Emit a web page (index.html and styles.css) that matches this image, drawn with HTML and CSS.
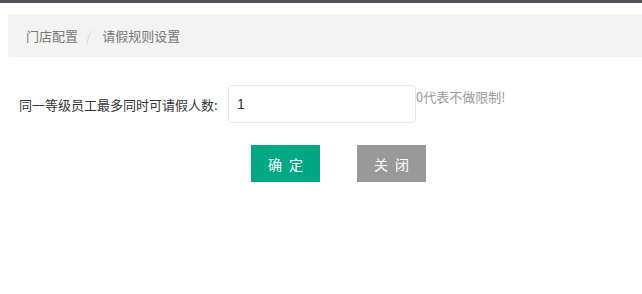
FILE: index.html
```html
<!DOCTYPE html>
<html lang="zh-CN">
<head>
<meta charset="utf-8">
<title>请假规则设置</title>
<link rel="stylesheet" href="styles.css">
</head>
<body>
<div class="topbar"></div>
<div class="crumb">
  <a class="crumb-link">门店配置</a><span class="sep">/</span><span class="crumb-cur">请假规则设置</span>
</div>
<form class="form">
  <div class="row">
    <label class="label">同一等级员工最多同时可请假人数:</label>
    <input class="input" type="text" value="1">
    <span class="hint">0代表不做限制!</span>
  </div>
  <div class="actions">
    <button type="button" class="btn btn-ok">确 定</button>
    <button type="button" class="btn btn-close">关 闭</button>
  </div>
</form>
</body>
</html>
```

FILE: styles.css
```css
html, body {
  margin: 0;
  padding: 0;
  overflow: hidden;
  background: #fff;
  font-family: "Noto Sans CJK SC", "Liberation Sans", sans-serif;
}
.topbar {
  height: 3px;
  background: #52545e;
}
.crumb {
  margin: 11px -20px 0 8px;
  height: 43px;
  background: #f3f3f3;
  border-radius: 3px;
  display: flex;
  align-items: center;
  padding-left: 18px;
  font-size: 13px;
  color: #777;
}
.sep {
  color: #d6d6d6;
  margin: 0 11px 0 8px;
}
.form {
  margin-top: 28px;
}
.row {
  display: flex;
  align-items: center;
  padding-left: 19px;
}
.label {
  font-size: 13px;
  color: #333;
  width: 201px;
  white-space: nowrap;
  margin-right: 8px;
}
.input {
  box-sizing: border-box;
  width: 188px;
  height: 38px;
  border: 1px solid #e6e6e6;
  border-radius: 4px;
  padding: 0 0 0 8px;
  font-size: 14px;
  color: #333;
  font-family: "Liberation Sans", sans-serif;
  outline: none;
}
.hint {
  align-self: flex-start;
  line-height: 23px;
  font-size: 13px;
  color: #999;
  white-space: nowrap;
}
.actions {
  display: flex;
  gap: 37px;
  margin: 22px 0 0 251px;
}
.btn {
  width: 69px;
  height: 37px;
  border: none;
  border-radius: 0;
  color: #fff;
  font-size: 14px;
  letter-spacing: 2px;
  text-indent: 2px;
  font-family: "Noto Sans CJK SC", sans-serif;
  padding: 0;
  cursor: pointer;
}
.btn-ok {
  background: #00a884;
}
.btn-close {
  background: #999;
}
```
